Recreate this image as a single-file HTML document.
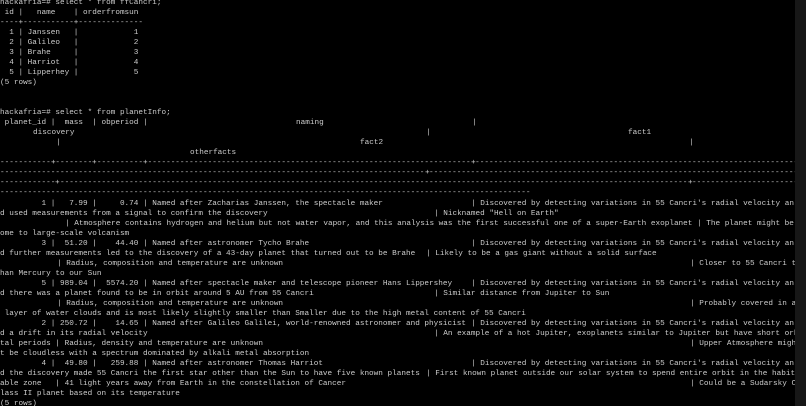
<!DOCTYPE html>
<html><head><meta charset="utf-8">
<style>
html,body{margin:0;padding:0;background:#000;}
#t{position:relative;width:806px;height:406px;overflow:hidden;background:#000;}
.sb{position:absolute;left:795px;top:0;width:11px;height:406px;background:#171717;}
.c{position:absolute;left:0;top:0;width:795px;height:406px;overflow:hidden;}
.l{position:absolute;left:0;width:795px;height:10px;white-space:pre;font-family:"Liberation Mono",monospace;font-size:7.7px;line-height:10px;color:#cccccc;}
.l span{position:absolute;top:0;white-space:pre;}
.d{overflow:hidden;}
</style></head><body><div id="t"><div class="c">
<div class="l" style="top:-2px">hackafria=# select * from ffCancri;</div>
<div class="l" style="top:8px"> id |   name    | orderfromsun</div>
<div class="l" style="top:18px">----+-----------+--------------</div>
<div class="l" style="top:28px">  1 | Janssen   |            1</div>
<div class="l" style="top:38px">  2 | Galileo   |            2</div>
<div class="l" style="top:48px">  3 | Brahe     |            3</div>
<div class="l" style="top:58px">  4 | Harriot   |            4</div>
<div class="l" style="top:68px">  5 | Lipperhey |            5</div>
<div class="l" style="top:78px">(5 rows)</div>
<div class="l" style="top:108px">hackafria=# select * from planetInfo;</div>
<div class="l" style="top:118px"> planet_id |  mass  | obperiod |<span style="left:296px">naming</span><span style="left:472px">|</span></div>
<div class="l" style="top:128px"><span style="left:33px">discovery</span><span style="left:426px">|</span><span style="left:628px">fact1</span></div>
<div class="l" style="top:138px"><span style="left:56px">|</span><span style="left:360px">fact2</span><span style="left:689px">|</span></div>
<div class="l" style="top:148px"><span style="left:190px">otherfacts</span></div>
<div class="l" style="top:158px">----------------------------------------------------------------------------------------------------------------------------------------------------------------------------------------<span style="left:51px">+</span><span style="left:92px">+</span><span style="left:143px">+</span><span style="left:471px">+</span></div>
<div class="l" style="top:168px">----------------------------------------------------------------------------------------------------------------------------------------------------------------------------------------<span style="left:425px">+</span></div>
<div class="l" style="top:178px">----------------------------------------------------------------------------------------------------------------------------------------------------------------------------------------<span style="left:55px">+</span><span style="left:688px">+</span></div>
<div class="l d" style="top:188px;width:530px">----------------------------------------------------------------------------------------------------------------------------------------------------</div>
<div class="l" style="top:199px">         1 |   7.99 |     0.74 | Named after Zacharias Janssen, the spectacle maker<span style="left:471px">| Discovered by detecting variations in 55 Cancri's radial velocity an</span></div>
<div class="l" style="top:209px">d used measurements from a signal to confirm the discovery<span style="left:434px">| Nicknamed "Hell on Earth"</span></div>
<div class="l" style="top:219px"><span style="left:65px">| Atmosphere contains hydrogen and helium but not water vapor, and this analysis was the first successful one of a super-Earth exoplanet | The planet might be h</span></div>
<div class="l" style="top:229px">ome to large-scale volcanism</div>
<div class="l" style="top:239px">         3 |  51.20 |    44.40 | Named after astronomer Tycho Brahe<span style="left:471px">| Discovered by detecting variations in 55 Cancri's radial velocity an</span></div>
<div class="l" style="top:249px">d further measurements led to the discovery of a 43-day planet that turned out to be Brahe<span style="left:426px">| Likely to be a gas giant without a solid surface</span></div>
<div class="l" style="top:259px"><span style="left:57px">| Radius, composition and temperature are unknown</span><span style="left:690px">| Closer to 55 Cancri t</span></div>
<div class="l" style="top:269px">han Mercury to our Sun</div>
<div class="l" style="top:279px">         5 | 989.04 |  5574.20 | Named after spectacle maker and telescope pioneer Hans Lippershey<span style="left:471px">| Discovered by detecting variations in 55 Cancri's radial velocity an</span></div>
<div class="l" style="top:289px">d there was a planet found to be in orbit around 5 AU from 55 Cancri<span style="left:434px">| Similar distance from Jupiter to Sun</span></div>
<div class="l" style="top:299px"><span style="left:57px">| Radius, composition and temperature are unknown</span><span style="left:690px">| Probably covered in a</span></div>
<div class="l" style="top:309px"> layer of water clouds and is most likely slightly smaller than Smaller due to the high metal content of 55 Cancri</div>
<div class="l" style="top:319px">         2 | 250.72 |    14.65 | Named after Galileo Galilei, world-renowned astronomer and physicist<span style="left:471px">| Discovered by detecting variations in 55 Cancri's radial velocity an</span></div>
<div class="l" style="top:329px">d a drift in its radial velocity<span style="left:434px">| An example of a hot Jupiter, exoplanets similar to Jupiter but have short orbi</span></div>
<div class="l" style="top:339px">tal periods | Radius, density and temperature are unknown<span style="left:690px">| Upper Atmosphere migh</span></div>
<div class="l" style="top:349px">t be cloudless with a spectrum dominated by alkali metal absorption</div>
<div class="l" style="top:359px">         4 |  49.80 |   259.88 | Named after astronomer Thomas Harriot<span style="left:471px">| Discovered by detecting variations in 55 Cancri's radial velocity an</span></div>
<div class="l" style="top:369px">d the discovery made 55 Cancri the first star other than the Sun to have five known planets<span style="left:426px">| First known planet outside our solar system to spend entire orbit in the habit</span></div>
<div class="l" style="top:379px">able zone   | 41 light years away from Earth in the constellation of Cancer<span style="left:690px">| Could be a Sudarsky C</span></div>
<div class="l" style="top:389px">lass II planet based on its temperature</div>
<div class="l" style="top:399px">(5 rows)</div>
</div><div class="sb"></div></div></body></html>
